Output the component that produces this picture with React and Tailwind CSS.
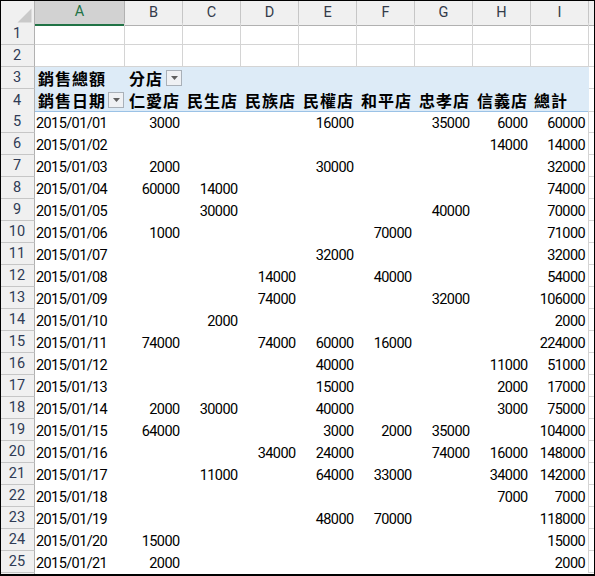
const stores = ["仁愛店", "民生店", "民族店", "民權店", "和平店", "忠孝店", "信義店", "總計"];
const letters = ["A", "B", "C", "D", "E", "F", "G", "H", "I"];
const rows = [
  ["2015/01/01", "3000", "", "", "16000", "", "35000", "6000", "60000"],
  ["2015/01/02", "", "", "", "", "", "", "14000", "14000"],
  ["2015/01/03", "2000", "", "", "30000", "", "", "", "32000"],
  ["2015/01/04", "60000", "14000", "", "", "", "", "", "74000"],
  ["2015/01/05", "", "30000", "", "", "", "40000", "", "70000"],
  ["2015/01/06", "1000", "", "", "", "70000", "", "", "71000"],
  ["2015/01/07", "", "", "", "32000", "", "", "", "32000"],
  ["2015/01/08", "", "", "14000", "", "40000", "", "", "54000"],
  ["2015/01/09", "", "", "74000", "", "", "32000", "", "106000"],
  ["2015/01/10", "", "2000", "", "", "", "", "", "2000"],
  ["2015/01/11", "74000", "", "74000", "60000", "16000", "", "", "224000"],
  ["2015/01/12", "", "", "", "40000", "", "", "11000", "51000"],
  ["2015/01/13", "", "", "", "15000", "", "", "2000", "17000"],
  ["2015/01/14", "2000", "30000", "", "40000", "", "", "3000", "75000"],
  ["2015/01/15", "64000", "", "", "3000", "2000", "35000", "", "104000"],
  ["2015/01/16", "", "", "34000", "24000", "", "74000", "16000", "148000"],
  ["2015/01/17", "", "11000", "", "64000", "33000", "", "34000", "142000"],
  ["2015/01/18", "", "", "", "", "", "", "7000", "7000"],
  ["2015/01/19", "", "", "", "48000", "70000", "", "", "118000"],
  ["2015/01/20", "15000", "", "", "", "", "", "", "15000"],
  ["2015/01/21", "2000", "", "", "", "", "", "", "2000"],
];

const gridCols = "grid h-[22px] grid-cols-[34px_90px_repeat(8,58px)_1fr]";
const cjk = "font-['Noto_Sans_CJK_TC','Liberation_Sans',sans-serif] text-[16px] font-bold leading-[22px] tracking-[1px] text-black";

function RowHead({ n }) {
  return (
    <div className="flex items-end justify-center border-r border-b border-r-[#b1b1b1] border-b-[#c6c6c6] bg-[#f0f0f0] pr-[1px] text-[14.5px] leading-[20px] text-[#2f3b55]">
      {n}
    </div>
  );
}

function FilterButton() {
  return (
    <div className="flex h-[16px] w-[16px] shrink-0 items-center justify-center border border-[#a9b0b8] bg-[#eff1f4]">
      <svg width="7" height="4" viewBox="0 0 7 4"><path d="M0 0h7L3.5 4z" fill="#5f5f5f" /></svg>
    </div>
  );
}

export default function App() {
  return (
    <div className="h-[576px] w-[595px] overflow-hidden border-x border-t border-b-2 border-black bg-white font-['Roboto','Liberation_Sans',sans-serif]">
      <div className={gridCols}>
        <div className="flex items-end justify-end border-r border-b border-r-[#b1b1b1] border-b-[#b1b1b1] bg-[#f0f0f0] pr-[2px] pb-[2px]">
          <svg width="15" height="15" viewBox="0 0 15 15"><path d="M14.5 0.5V14.5H0.5z" fill="#c9c9c9" /></svg>
        </div>
        {letters.map((l, i) => (
          <div
            key={l}
            className={
              i === 0
                ? "flex items-center justify-center border-r border-b-2 border-r-[#b1b1b1] border-b-[#217346] bg-[#d2d2d2] pb-[1px] text-[14.5px] text-[#217346]"
                : "flex items-center justify-center border-r border-b border-r-[#c6c6c6] border-b-[#b1b1b1] bg-[#f0f0f0] pb-[1px] text-[14.5px] text-[#333b4a]"
            }
          >
            {l}
          </div>
        ))}
        <div className="border-b border-b-[#b1b1b1] bg-[#f0f0f0]" />
      </div>

      {[1, 2].map((n) => (
        <div key={n} className={gridCols}>
          <RowHead n={n} />
          {letters.map((l) => (
            <div key={l} className="border-r border-b border-[#d4d4d4]" />
          ))}
          <div className="border-b border-[#d4d4d4]" />
        </div>
      ))}

      <div className={gridCols}>
        <RowHead n={3} />
        <div className={`col-span-9 flex bg-[#ddebf7] ${cjk}`}>
          <div className="w-[90px] pl-[3px]">銷售總額</div>
          <div className="flex w-[58px] items-center justify-between pr-[1px] pl-[4px]">
            <span>分店</span>
            <FilterButton />
          </div>
        </div>
        <div className="border-b border-[#d4d4d4]" />
      </div>

      <div className={gridCols}>
        <RowHead n={4} />
        <div className={`col-span-9 flex border-b border-[#9bc2e6] bg-[#ddebf7] ${cjk}`}>
          <div className="flex w-[90px] items-center justify-between pr-[1px] pl-[3px]">
            <span>銷售日期</span>
            <FilterButton />
          </div>
          {stores.map((s, i) => (
            <div key={s} className={i === 7 ? "w-[58px] pl-[3px]" : "w-[58px] pl-[4px]"}>{s}</div>
          ))}
        </div>
        <div className="border-b border-[#d4d4d4]" />
      </div>

      {rows.map((r, i) => (
        <div key={r[0]} className={gridCols}>
          <RowHead n={i + 5} />
          {r.map((v, j) => (
            <div
              key={j}
              className={
                j === 0
                  ? "pt-[3px] pl-[1px] text-[14.5px] leading-[19px] tracking-[-0.6px] text-black"
                  : j === 8
                    ? "border-r border-[#d4d4d4] pt-[3px] pr-[3px] text-right text-[14.5px] leading-[19px] tracking-[-0.6px] text-black"
                    : "pt-[3px] pr-[3.5px] text-right text-[14.5px] leading-[19px] tracking-[-0.6px] text-black"
              }
            >
              {v}
            </div>
          ))}
          <div className="border-b border-[#d4d4d4]" />
        </div>
      ))}

      <div className={`${gridCols} !h-[2px]`}>
        <div className="border-r border-r-[#b1b1b1] bg-[#f0f0f0]" />
        <div className="col-span-10 bg-white" />
      </div>
    </div>
  );
}
